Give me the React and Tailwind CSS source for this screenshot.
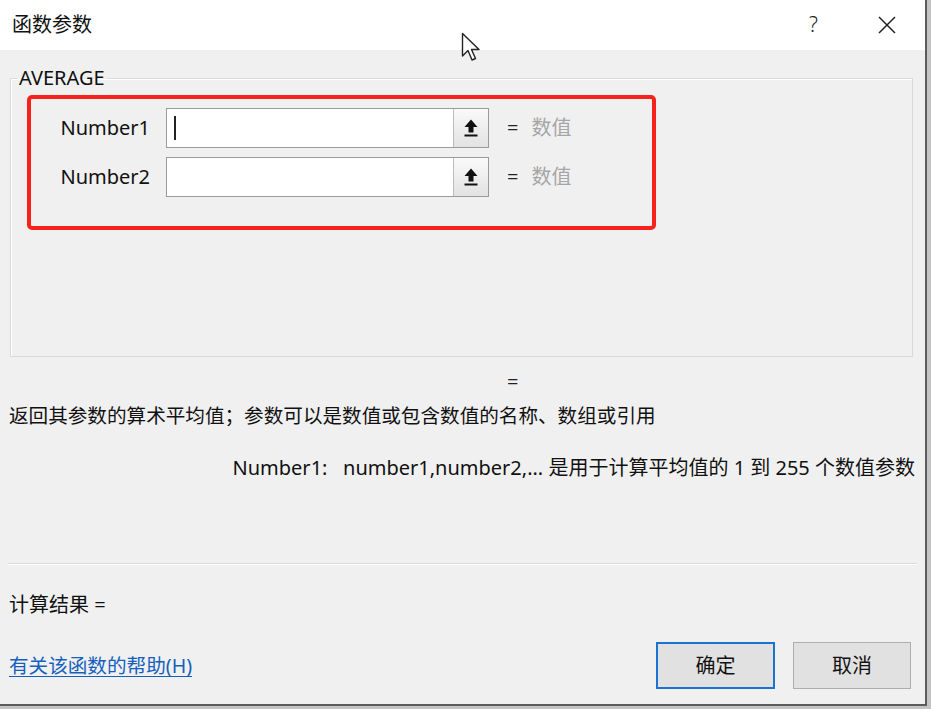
import React from 'react';

const font = { fontFamily: '"Noto Sans", "Noto Sans CJK SC", sans-serif' };

function PickIcon() {
  return (
    <svg width="16" height="20" viewBox="0 0 16 20" fill="none">
      <path d="M8 1.5 L1.5 9 H5.5 V14.5 H10.5 V9 H14.5 Z" fill="#111" />
      <rect x="1.5" y="16.5" width="13" height="2" fill="#111" />
    </svg>
  );
}

function ArgRow({ label, caret }) {
  return (
    <div className="flex items-center h-[40px]">
      <div className="w-[119px] text-right text-[20px] text-[#111]">{label}</div>
      <div className="ml-[16px] w-[323px] h-[40px] flex border border-[#9a9a9a] bg-white">
        <div className="flex-1 flex items-center pl-[7px]">
          {caret && <div className="w-[1.5px] h-[24px] bg-[#222]" />}
        </div>
        <div className="w-[35px] h-full border-l border-[#bdbdbd] bg-gradient-to-b from-[#fafafa] to-[#e2e2e2] flex items-center justify-center">
          <PickIcon />
        </div>
      </div>
      <div className="ml-[18px] text-[20px] text-[#222]">=</div>
      <div className="ml-[13px] text-[20px] text-[#a6a6a6]">数值</div>
    </div>
  );
}

export default function App() {
  return (
    <div className="w-[931px] h-[709px] bg-[#c4c4c4] overflow-hidden" style={font}>
      <div className="relative w-[927px] h-[706px] flex flex-col border-r-2 border-b-2 border-[#5c5c5c] bg-[#f0f0f0]">
        {/* title bar */}
        <div className="h-[50px] bg-white flex items-center pl-[12px] pr-[29px] shrink-0">
          <div className="text-[20px] text-[#111]">函数参数</div>
          <div className="flex-1" />
          <div className="text-[21px] text-[#222] font-light mr-[60px]">?</div>
          <svg width="18" height="18" viewBox="0 0 18 18">
            <path d="M1 1 L17 17 M17 1 L1 17" stroke="#222" strokeWidth="1.5" />
          </svg>
        </div>

        {/* mouse pointer */}
        <svg className="absolute left-[461px] top-[32px]" width="22" height="32" viewBox="0 0 22 32">
          <path d="M1.5 1.5 V24 L7 18.5 L11 28 L14.5 26.5 L10.5 17.5 H18 Z" fill="#fff" stroke="#222" strokeWidth="1.4" strokeLinejoin="round" />
        </svg>

        <div className="flex-1 flex flex-col">
          <fieldset className="mt-[17px] ml-[10px] w-[903px] h-[290px] border border-[#d9d9d9] shadow-[inset_1px_1px_0_#fff]">
            <legend className="ml-[6px] px-[2px] text-[20px] leading-[22px] text-[#111]">AVERAGE</legend>
            <div className="mt-[6px] ml-[16px] w-[629px] h-[135px] border-[4px] border-[#f5231c] rounded-[5px] pt-[9px] flex flex-col gap-[9px]">
              <ArgRow label="Number1" caret />
              <ArgRow label="Number2" />
            </div>
          </fieldset>

          <div className="mt-[14px] h-[22px] leading-[22px] text-[20px] text-[#222] pl-[507px]">=</div>

          <div className="mt-[12px] pl-[9px] h-[22px] leading-[22px] text-[19.6px] text-[#111]">
            返回其参数的算术平均值；参数可以是数值或包含数值的名称、数组或引用
          </div>

          <div className="mt-[30px] pr-[10px] h-[22px] leading-[22px] text-[20px] text-[#111] text-right whitespace-nowrap">
            Number1:&nbsp;&nbsp;&nbsp;number1,number2,... 是用于计算平均值的 1 到 255 个数值参数
          </div>

          <div className="mt-[84px] mx-[8px] h-[2px] border-t border-[#dcdcdc] border-b border-b-white" />

          <div className="mt-[29px] pl-[9px] h-[22px] leading-[22px] text-[20px] text-[#111]">计算结果 =</div>

          <div className="mt-[26px] h-[47px] flex items-center pl-[9px] pr-[14px]">
            <a className="text-[19.6px] text-[#1560bd] underline underline-offset-[3px] cursor-pointer">有关该函数的帮助(H)</a>
            <div className="flex-1" />
            <button className="w-[119px] h-[47px] bg-[#e1e1e1] border-2 border-[#1a73d0] text-[20px] text-[#111]">确定</button>
            <button className="ml-[18px] w-[118px] h-[47px] bg-[#e1e1e1] border border-[#adadad] text-[20px] text-[#111]">取消</button>
          </div>
        </div>
      </div>
    </div>
  );
}
